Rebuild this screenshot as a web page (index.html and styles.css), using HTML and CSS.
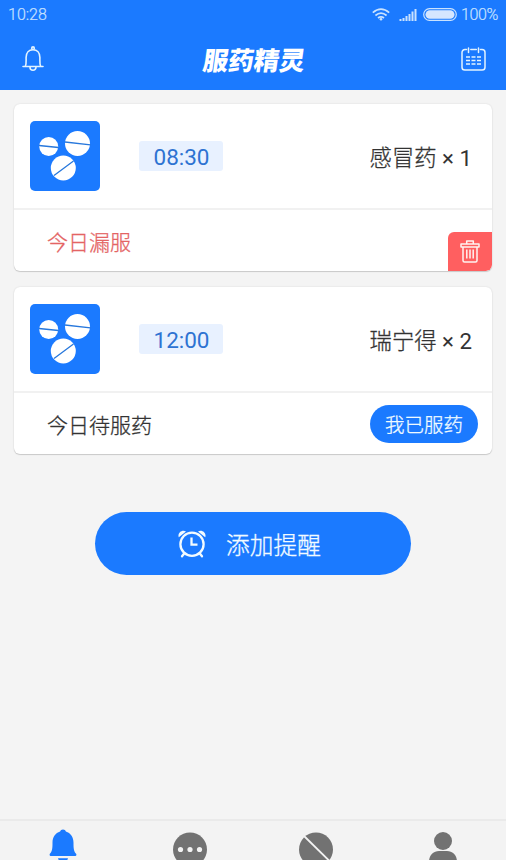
FILE: index.html
```html
<!DOCTYPE html>
<html lang="zh-CN">
<head>
<meta charset="utf-8">
<title>服药精灵</title>
<link rel="stylesheet" href="styles.css">
</head>
<body>
<svg width="0" height="0" class="defs">
  <symbol id="pills" viewBox="0 0 70 70">
    <g fill="#fff"><circle cx="18.700" cy="25.500" r="9.500"/><circle cx="47.500" cy="22.500" r="12.500"/><circle cx="33.300" cy="47" r="12.500"/></g>
    <path d="M9 24.500l19.500 2M35 21l25.500 2.800M24 54.500l19.500-14.500" stroke="#2878dc" stroke-width="1.300" fill="none"/>
  </symbol>
</svg>
<div class="app">
  <header class="header">
    <div class="status">
      <span class="clock">10:28</span>
      <svg class="wifi" viewBox="0 0 18 13" width="18" height="13" fill="none" stroke="#c9e2ff" stroke-width="1.700"><path d="M.8 4.600Q9-2.400 17.200 4.600M3.400 7.500Q9 2.800 14.600 7.500M6 10Q9 7.600 12 10"/><circle cx="9" cy="11.300" r="1.300" fill="#c9e2ff" stroke="none"/></svg>
      <svg class="signal" viewBox="0 0 18 12" width="18" height="12" fill="#c9e2ff"><path d="M.5 10h2v2h-2zM3.500 9h2v3h-2zM6.500 7h2v5h-2zM9.500 5h2v7h-2zM12.500 2.500h2v9.500h-2zM15.500 0h2v12h-2z"/></svg>
      <svg class="battery" viewBox="0 0 34 13" width="34" height="13"><rect x=".7" y=".7" width="32.600" height="11.600" rx="5.800" fill="none" stroke="#c9e2ff" stroke-width="1.200"/><rect x="2.500" y="2.200" width="29" height="8.600" rx="4.300" fill="#d5e6ff"/></svg>
      <span class="percent">100%</span>
    </div>
    <div class="titlebar">
      <svg viewBox="0 0 22 26" width="22" height="26" fill="none" stroke="#e2f3ff" stroke-width="1.600" stroke-linejoin="round" stroke-linecap="round"><circle cx="11" cy="2.200" r="1.300"/><path d="M1 20.500h20M3.300 20.500c1.200-2.500.8-5 .8-9C4.100 6.500 7 3.700 11 3.700s6.900 2.800 6.900 7.800c0 4-.4 6.500.8 9M8 21.200a3 3 0 0 0 6 0"/></svg>
      <h1 class="title">服药精灵</h1>
      <svg class="calendar" viewBox="0 0 25 24" width="25" height="24" fill="none" stroke="#e2f3ff" stroke-width="1.500" stroke-linecap="round"><path d="M5.500 2.500H4A3 3 0 0 0 1 5.500v14.700A2.800 2.800 0 0 0 3.800 23h17.400a2.800 2.800 0 0 0 2.800-2.800V5.500a3 3 0 0 0-3-3h-1.500M7.500 1v4.500M17.500 1v4.500M9.800 2.500h5.500"/><path d="M5 10h4M10.500 10h4M16 10h4M5 13.500h4M10.500 13.500h4M16 13.500h4M5 17h4M10.500 17h4M16 17h4" stroke-linecap="butt" stroke-width="1.700"/></svg>
    </div>
  </header>
  <main class="main">
    <section class="card">
      <div class="medicine">
        <svg class="thumb"><use href="#pills"/></svg>
        <span class="time">08:30</span>
        <span class="name">感冒药<span class="dose"> × 1</span></span>
      </div>
      <div class="state missed">
        <span>今日漏服</span>
        <button class="delete" aria-label="删除"><svg viewBox="0 0 20 23" width="20" height="23" fill="none" stroke="#fff3f0" stroke-width="1.500" stroke-linejoin="round"><path d="M1 4h18v3H1zM6.700 4V1h6.600v3M3 7v13.500Q3 22 4.500 22h11q1.500 0 1.500-1.500V7M6.800 9.500v9M10 9.500v9M13.200 9.500v9"/></svg></button>
      </div>
    </section>
    <section class="card">
      <div class="medicine">
        <svg class="thumb"><use href="#pills"/></svg>
        <span class="time">12:00</span>
        <span class="name">瑞宁得<span class="dose"> × 2</span></span>
      </div>
      <div class="state">
        <span>今日待服药</span>
        <button class="taken">我已服药</button>
      </div>
    </section>
    <button class="add">
      <svg viewBox="0 0 28 28" width="28" height="28" fill="none" stroke="#f2fbff" stroke-width="2.300" stroke-linecap="round"><circle cx="14" cy="14.200" r="11.600"/><path d="M13.500 7.500v7.200h6" stroke-linecap="butt"/><path d="M6.200 23.500L4 26.300M21.800 23.500l2.200 2.800"/><path d="M.8 7.300C-.8 3.500 3.500-.8 8 1.400zM27.200 7.300C28.800 3.500 24.500-.8 20 1.400z" fill="#f2fbff" stroke="none"/></svg>
      <span>添加提醒</span>
    </button>
  </main>
  <nav class="tabs">
    <a class="tab"><svg class="bell" viewBox="0 0 28 36" width="28" height="36" fill="#1b7aff"><path d="M14 .5c1.500 0 2.500.8 2.900 2C21.500 4 24.500 8 24.500 13.500c0 6 .2 9 2.800 11.500q.4 2-1 2H1.700q-1.400 0-1-2C3.300 22.500 3.500 19.500 3.500 13.500c0-5.500 3-9.500 7.600-11C11.500 1.300 12.500.5 14 .5zM9 29.200h10c-1 5-9 5-10 0z"/></svg></a>
    <a class="tab"><svg viewBox="0 0 34 36" width="34" height="36"><circle cx="17" cy="19.500" r="17" fill="#727272"/><g fill="#f3f3f3"><circle cx="7.500" cy="19.500" r="2.600"/><circle cx="17" cy="19.500" r="2.600"/><circle cx="26.500" cy="19.500" r="2.600"/></g></svg></a>
    <a class="tab"><svg viewBox="0 0 34 36" width="34" height="36"><circle cx="17" cy="19.500" r="17" fill="#727272"/><path d="M4.500 5.500L31 31.500" stroke="#f3f3f3" stroke-width="1.800"/></svg></a>
    <a class="tab"><svg viewBox="0 0 28 36" width="28" height="36" fill="#727272"><circle cx="14" cy="11" r="9"/><path d="M0 36V32c0-6.500 4-11 10-11h8c6 0 10 4.500 10 11v4z"/></svg></a>
  </nav>
</div>
</body>
</html>
```
FILE: styles.css
```css
* { box-sizing: border-box; }

body {
  margin: 0;
  background: #f4f4f4;
  color: #333;
  font-family: Roboto, "Noto Sans CJK SC", sans-serif;
  overflow: hidden;
}

svg { display: block; flex: none; }
.defs { display: none; }
button { border: 0; padding: 0; font: inherit; }

.app {
  height: 860px;
  display: flex;
  flex-direction: column;
}

.header {
  height: 90px;
  flex: none;
  background: #1b7aff;
}

.status {
  height: 30px;
  display: flex;
  align-items: center;
  padding: 0 8px 1px;
  color: #c9e2ff;
  font-size: 16px;
  font-weight: 300;
  -webkit-text-stroke: 0.2px;
}
.clock { margin-right: auto; }
.wifi { margin-right: 9px; }
.signal { margin-right: 6px; }
.battery { margin-right: 4px; }
.percent { width: 37px; letter-spacing: -0.4px; }

.titlebar {
  height: 60px;
  display: flex;
  justify-content: space-between;
  padding: 16px 20px 0 22px;
}
.title {
  margin: 0 0 0 1px;
  color: #fff;
  font-size: 25.500px;
  line-height: 30px;
  font-weight: 900;
  transform: skewX(-8deg);
}
.calendar { margin-top: 1px; }

.main {
  flex: 1;
  padding: 14px 14px 0;
}

.card {
  height: 167px;
  margin-bottom: 16px;
  border-radius: 6px;
  background: #fff;
  box-shadow: 0 0 2px rgba(0, 0, 0, 0.12), 0 1px 1px rgba(0, 0, 0, 0.15);
  overflow: hidden;
}

.medicine {
  height: 106px;
  display: flex;
  align-items: center;
  padding: 0 20px 0 16px;
  border-bottom: 2px solid #f1f1f1;
}
.thumb {
  width: 70px;
  height: 70px;
  border-radius: 5px;
  background: #1b7aff;
}
.time {
  width: 84px;
  height: 30px;
  margin-left: 39px;
  border-radius: 3px;
  background: #e8f1ff;
  color: #2e73d2;
  font-size: 22.500px;
  line-height: 33px;
  text-align: center;
  text-indent: 1px;
}
.name {
  margin-left: auto;
  font-size: 22.300px;
  font-weight: 300;
  white-space: nowrap;
  -webkit-text-stroke: 0.3px;
}
.dose {
  font-weight: 400;
  -webkit-text-stroke: 0;
}

.state {
  height: 61px;
  display: flex;
  align-items: center;
  justify-content: space-between;
  padding: 0 14px 0 33px;
  font-size: 21px;
  font-weight: 300;
  -webkit-text-stroke: 0.3px;
}
.missed {
  padding-right: 0;
  color: #e46464;
}
.delete {
  width: 44px;
  height: 39px;
  align-self: flex-end;
  display: flex;
  align-items: center;
  justify-content: center;
  border-radius: 6px 0 6px 0;
  background: #ff5f60;
}
.taken {
  width: 108px;
  height: 38px;
  border-radius: 19px;
  background: #1b7aff;
  color: #effaff;
  font-size: 19.500px;
}

.add {
  width: 316px;
  height: 63px;
  margin: 58px auto 0;
  display: flex;
  align-items: center;
  justify-content: center;
  gap: 20px;
  padding-right: 7px;
  border-radius: 32px;
  background: #1b7aff;
  color: #f2fbff;
  font-size: 23.700px;
  font-weight: 300;
  -webkit-text-stroke: 0.3px;
}

.tabs {
  height: 41px;
  flex: none;
  display: grid;
  grid-template-columns: repeat(4, 1fr);
  border-top: 2px solid #eaeaea;
  background: #f3f3f3;
  overflow: hidden;
}
.tab {
  display: flex;
  justify-content: center;
  padding-top: 9px;
}
.bell { margin-top: -1px; }
```
